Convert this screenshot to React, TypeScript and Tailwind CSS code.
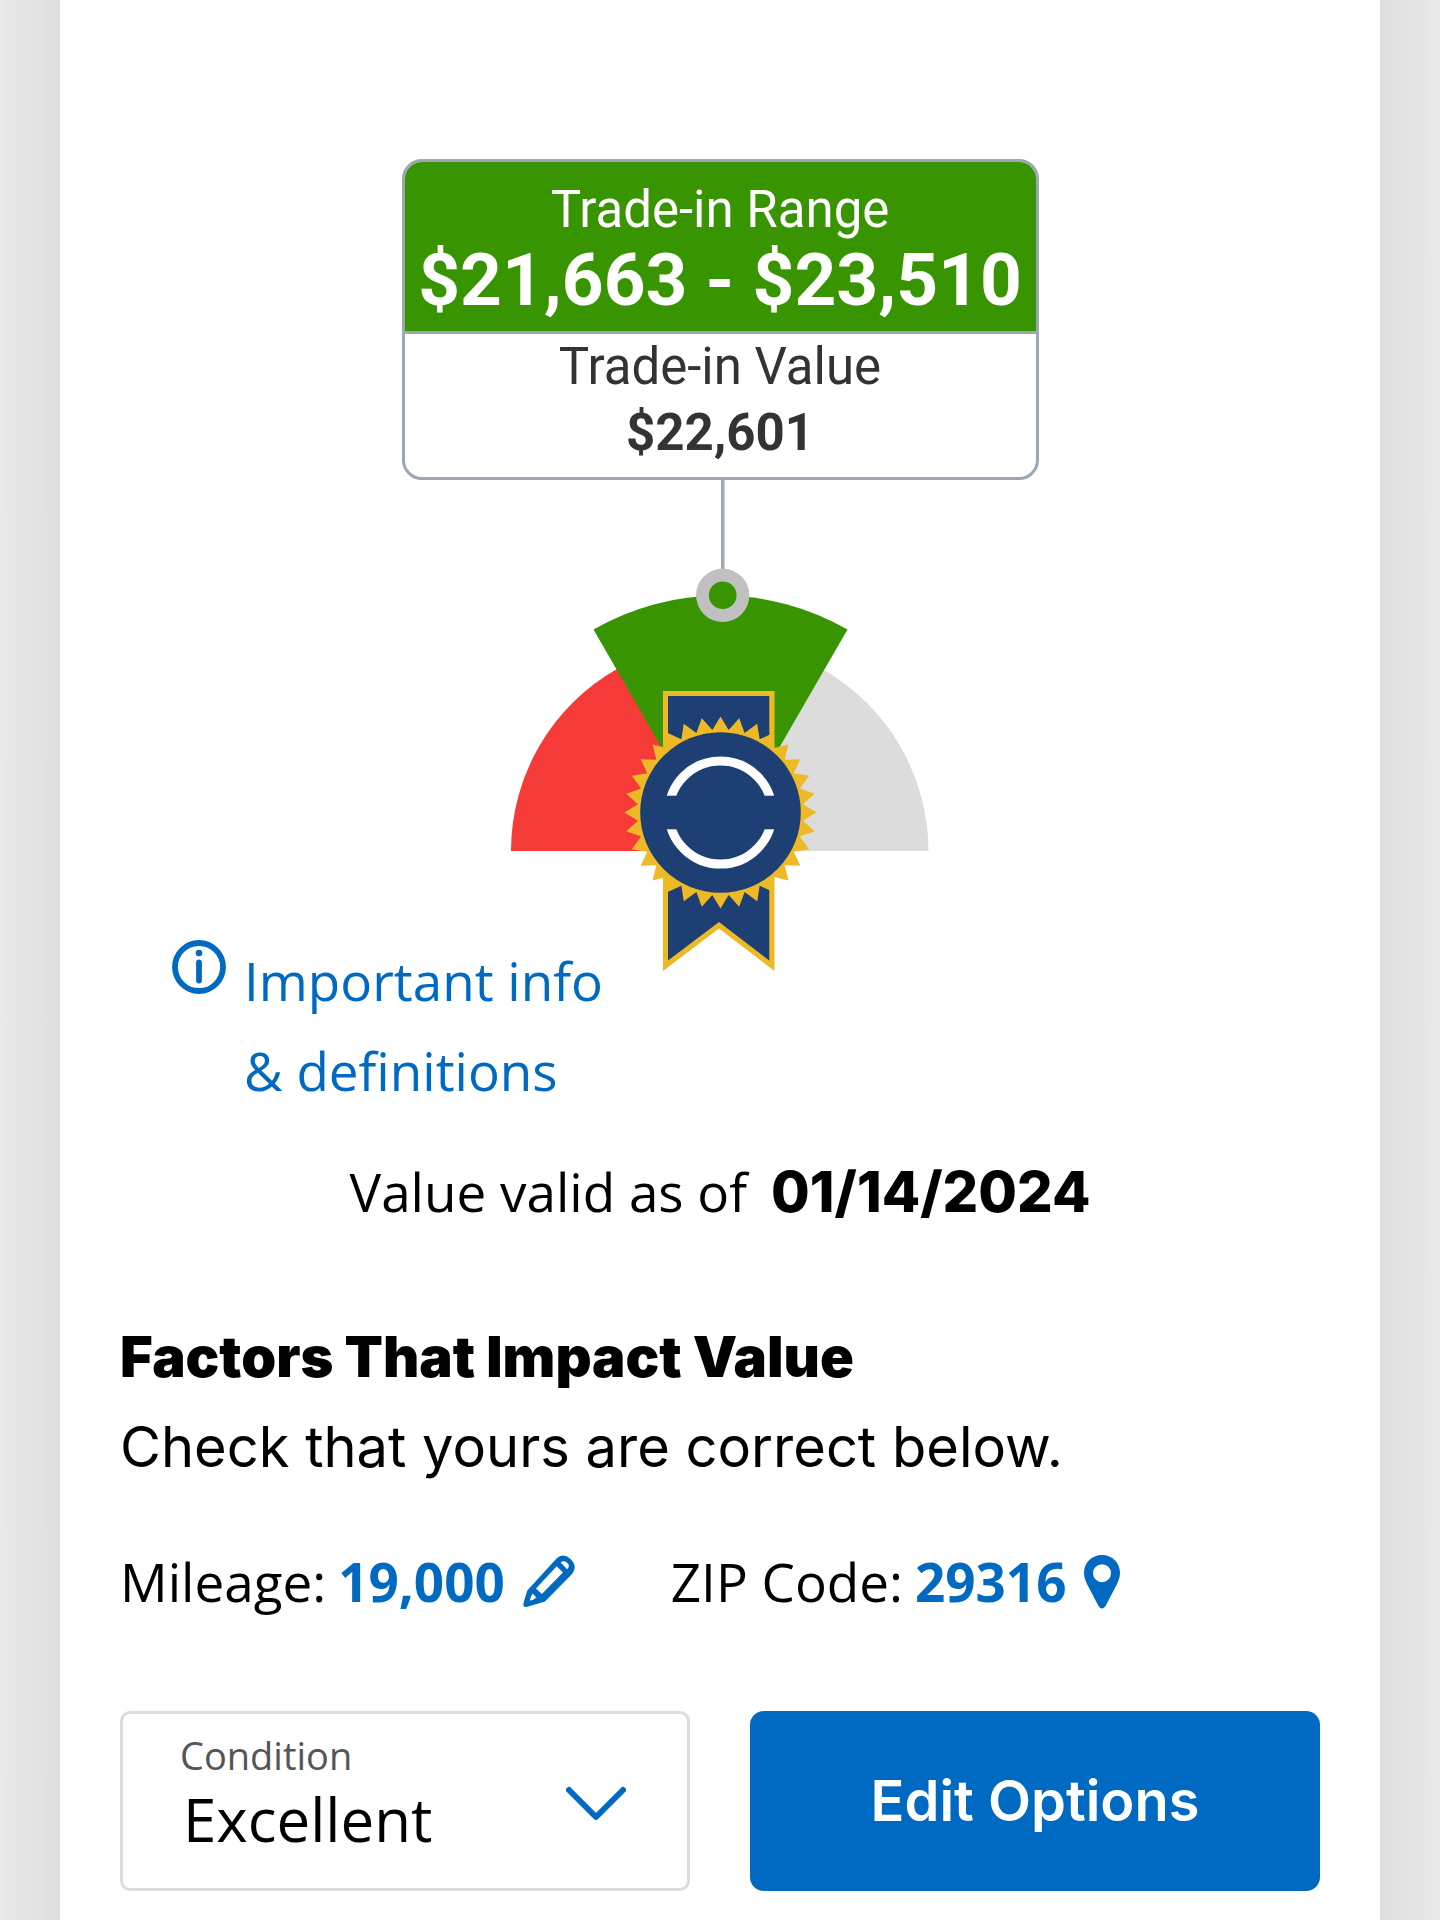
import type { ReactNode } from "react"

const CX = 720.5
const CY = 812.5
const TEETH = 32

// Star outline of the rosette, alternating tip and valley
const rosettePoints = Array.from({ length: TEETH * 2 }, (_, i) => {
  const radius = i % 2 === 0 ? 96 : 83
  const angle = (i * Math.PI) / TEETH - Math.PI / 2
  return `${(CX + radius * Math.cos(angle)).toFixed(2)},${(CY + radius * Math.sin(angle)).toFixed(2)}`
}).join(" ")

function ValueGauge() {
  return (
    <svg viewBox="510 480 420 492" className="-mb-9 h-[492px] w-[420px] max-w-full" role="img" aria-label="Trade-in value gauge">
      {/* Pointer line */}
      <rect x="721" y="480" width="3.5" height="92" fill="#9ba7b3" />
      {/* Sectors */}
      <path d="M722 851 H511 A209.5 209.5 0 0 1 617 669 Z" fill="#f53b38" />
      <path d="M719 851 H928.5 A209.5 209.5 0 0 0 824 670 Z" fill="#dcdcdc" />
      <path d="M720.5 849.5 L593.5 629.5 A254 254 0 0 1 847.5 629.5 Z" fill="#389400" />
      {/* Marker */}
      <circle cx="722.7" cy="595.3" r="26.7" fill="#c0c0c0" />
      <circle cx="722.7" cy="595.3" r="13.8" fill="#389400" />
      {/* Ribbon */}
      <path d="M663 691 H774.5 V971 L719 928.5 L663 971 Z" fill="#edb927" />
      <path d="M668 696 H769.3 V960.5 L719 922 L668 960.5 Z" fill="#1e3f73" />
      {/* Rosette */}
      <polygon points={rosettePoints} fill="#edb927" />
      <circle cx={CX} cy={CY} r="80.3" fill="#1e3f73" />
      <circle cx={CX} cy={CY} r="51.6" fill="none" stroke="#fff" strokeWidth="9" />
      <rect x="662" y="795.7" width="117" height="33.6" fill="#1e3f73" />
    </svg>
  )
}

function InfoIcon() {
  return (
    <svg viewBox="0 0 54 54" className="mt-1 size-[54px] shrink-0" fill="none" stroke="#006ac3" aria-hidden="true">
      <circle cx="27" cy="27" r="24" strokeWidth="5.8" />
      <path d="M27 22.5 V40.5" strokeWidth="5.8" strokeLinecap="round" />
      <circle cx="27" cy="13" r="3.3" fill="#006ac3" stroke="none" />
    </svg>
  )
}

function PencilIcon() {
  return (
    <svg viewBox="0 0 52 54" className="h-[54px] w-[52px]" aria-hidden="true">
      <path
        fillRule="evenodd"
        fill="#006ac3"
        d="M4.3 35.5 L33.5 3.4 Q40 -2.2 47 3.4 Q55 11 49.5 18.5 L22 46.4 L3.5 52 Q-0.4 52.5 0.4 48.6 Z M33.7 11.3 L39.9 17.5 L18.9 39 L13 33.6 Z M37.6 7.6 Q40.2 5 43.8 7.4 Q47.8 11 44.2 14.2 Z M9.6 38.6 L13.4 42.4 Q10.2 45.4 6.8 45.4 Q7.6 41.8 9.6 38.6 Z"
      />
    </svg>
  )
}

function PinIcon() {
  return (
    <svg viewBox="0 0 36 54" className="h-[54px] w-9" aria-hidden="true">
      <path
        fillRule="evenodd"
        fill="#006ac3"
        d="M18 0 C28.4 0 36 7.8 36 18 C36 22 34.5 26 32.5 30 L21.5 51 Q18 56 14.5 51 L3.5 30 C1.5 26 0 22 0 18 C0 7.8 7.6 0 18 0 Z M18 9.2 A9 9 0 1 0 18 27.2 A9 9 0 1 0 18 9.2 Z"
      />
    </svg>
  )
}

function Factor({ label, value, children }: { label: string; value: string; children: ReactNode }) {
  return (
    <div className="flex items-center whitespace-nowrap">
      <span className="mr-3">{label}:</span>
      <button type="button" aria-label={`Edit ${label}`} className="flex items-center gap-[18px] font-bold text-[#006ac3]">
        {value}
        {children}
      </button>
    </div>
  )
}

export default function App() {
  return (
    <div className="flex min-h-screen font-['Open_Sans',sans-serif] text-[53px] leading-[90px] text-black">
      <div className="w-[60px] shrink-0 bg-linear-to-r from-[#eaeaea] to-[#dedede]" />
      <main className="min-w-0 flex-1 bg-white px-[60px] pt-[159px] pb-[29px]">
        <section className="flex flex-col items-center">
          {/* Price card */}
          <div className="w-[637px] max-w-full overflow-hidden rounded-[20px] border-[3px] border-[#9ba7b3] text-center font-[Roboto,sans-serif] text-[51px] leading-[66px]">
            <div className="border-b-[3px] border-[#9ba7b3] bg-[#389400] pt-[15px] pb-3.5 text-white">
              <p>Trade-in Range</p>
              <p className="text-[73px] leading-[74px] font-bold">$21,663 - $23,510</p>
            </div>
            <div className="pb-[11px] text-[#333]">
              <p>Trade-in Value</p>
              <p className="font-bold">$22,601</p>
            </div>
          </div>
          <ValueGauge />
        </section>

        <a href="#definitions" className="relative ml-[52px] flex w-fit gap-[18px] text-[#006ac3]">
          <InfoIcon />
          <span>
            Important info
            <br />
            &amp; definitions
          </span>
        </a>

        <p className="mt-[31px] flex justify-center gap-6">
          Value valid as of
          <strong className="font-[Inter,sans-serif] text-[56px] font-extrabold">01/14/2024</strong>
        </p>

        <section className="mt-[75px]">
          <div className="font-[Inter,sans-serif] text-[56px]">
            <h2 className="font-black">Factors That Impact Value</h2>
            <p>Check that yours are correct below.</p>
          </div>

          <div className="mt-[45px] flex gap-24">
            <Factor label="Mileage" value="19,000">
              <PencilIcon />
            </Factor>
            <Factor label="ZIP Code" value="29316">
              <PinIcon />
            </Factor>
          </div>

          <div className="mt-[84px] grid grid-cols-2 gap-[60px]">
            <div className="relative h-[180px]">
              <label htmlFor="condition" className="pointer-events-none absolute top-[18px] left-[60px] text-[38px] leading-[52px] text-[#555]">
                Condition
              </label>
              <select
                id="condition"
                defaultValue="excellent"
                className="size-full appearance-none rounded-[10px] border-[3px] border-[#dcdcdc] bg-white pt-9 pl-[60px] text-[60px]"
              >
                <option value="excellent">Excellent</option>
                <option value="very-good">Very Good</option>
                <option value="good">Good</option>
                <option value="fair">Fair</option>
              </select>
              <svg viewBox="0 0 60 36" className="pointer-events-none absolute top-[75px] right-16 h-9 w-[60px]" fill="none" stroke="#006ac3" strokeWidth="6" strokeLinecap="round" strokeLinejoin="round" aria-hidden="true">
                <path d="M3 4 L30 31 L57 4" />
              </svg>
            </div>
            <button type="button" className="h-[180px] rounded-[14px] bg-[#006ac3] font-[Inter,sans-serif] text-[56px] font-semibold text-white">
              Edit Options
            </button>
          </div>
        </section>
      </main>
      <div className="w-[60px] shrink-0 bg-linear-to-l from-[#eaeaea] to-[#dedede]" />
    </div>
  )
}
